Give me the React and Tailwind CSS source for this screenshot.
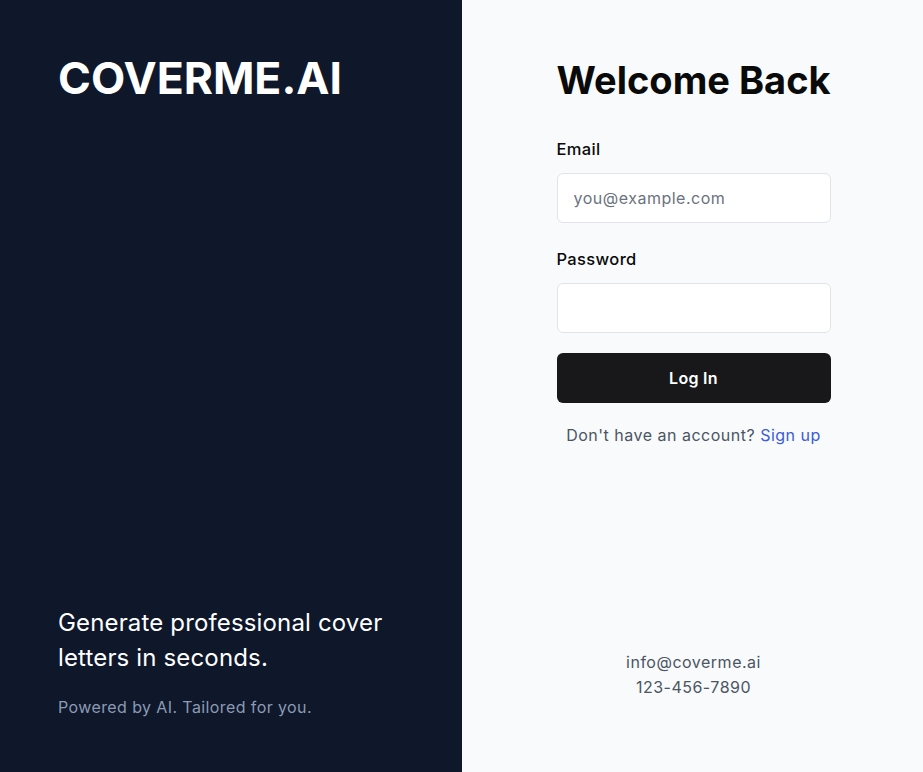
import React from 'react';

export default function App() {
  return (
    <div
      className="flex h-[772px] w-full"
      style={{ fontFamily: 'Inter, "Liberation Sans", sans-serif' }}
    >
      {/* Left brand panel */}
      <div className="flex w-[462px] shrink-0 flex-col justify-between bg-[#0f172a] px-[58px] pt-[56px] pb-[53px] text-white">
        <h1 className="text-[44.5px] font-bold leading-none">COVERME.AI</h1>
        <div>
          <p className="text-[24px] leading-[35px] tracking-[0.15px]">Generate professional cover letters in seconds.</p>
          <p className="mt-[20px] text-[16px] tracking-[0.4px] text-[#8b9bb4]">Powered by AI. Tailored for you.</p>
        </div>
      </div>

      {/* Right form panel */}
      <div className="flex flex-1 flex-col items-center justify-between bg-[#f8fafc] pl-[2px] pt-[58px] pb-[72px]">
        <div className="w-[274px]">
          <h2 className="whitespace-nowrap text-[38px] font-bold leading-[44px] text-[#0a0a0a]">Welcome Back</h2>

          <form className="mt-[35px]" onSubmit={(e) => e.preventDefault()}>
            <label className="block text-[16.5px] font-medium tracking-[0.35px] text-[#0a0a0a]">Email</label>
            <input
              type="email"
              placeholder="you@example.com"
              className="mt-[11px] h-[50px] w-full rounded-md border border-[#e2e4e9] bg-white px-4 text-[16px] tracking-[0.5px] text-gray-900 placeholder:text-[#6b7280] outline-none"
            />

            <label className="mt-[24px] block text-[16.5px] font-medium tracking-[0.35px] text-[#0a0a0a]">Password</label>
            <input
              type="password"
              className="mt-[11px] h-[50px] w-full rounded-md border border-[#e2e4e9] bg-white px-4 text-[16px] outline-none"
            />

            <button
              type="submit"
              className="mt-[20px] h-[50px] w-full rounded-md bg-[#18181b] text-[16px] font-semibold tracking-[0.3px] text-white"
            >
              Log In
            </button>
          </form>

          <p className="mt-[20px] text-center text-[16px] tracking-[0.5px] text-[#4b5563]">
            Don't have an account? <a href="#" className="text-[#3b5bdb]">Sign up</a>
          </p>
        </div>

        <div className="text-center text-[16px] leading-[25px] tracking-[0.5px] text-[#4b5563]">
          <p>info@coverme.ai</p>
          <p>123-456-7890</p>
        </div>
      </div>
    </div>
  );
}
